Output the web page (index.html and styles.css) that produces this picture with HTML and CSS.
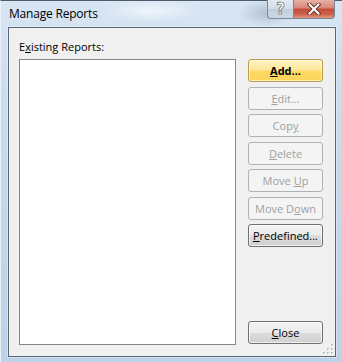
FILE: index.html
```html
<!DOCTYPE html>
<html>
<head>
<meta charset="utf-8">
<link rel="stylesheet" href="styles.css">
</head>
<body>
<div class="window">
  <div class="titlebar">
    <span class="title">Manage Reports</span>
    <div class="caption">
      <div class="cap-btn help"><span>?</span></div>
      <div class="cap-btn close-x">
        <svg width="14" height="12" viewBox="0 0 14 12"><path d="M2.5 1.5 L11.5 10.5 M11.5 1.5 L2.5 10.5" stroke="#6a3328" stroke-width="4" stroke-linecap="square"/><path d="M2.5 1.5 L11.5 10.5 M11.5 1.5 L2.5 10.5" stroke="#ffffff" stroke-width="2" stroke-linecap="square"/></svg>
      </div>
    </div>
  </div>
  <div class="client">
    <div class="left">
      <div class="label">E<u>x</u>isting Reports:</div>
      <div class="listbox"></div>
    </div>
    <div class="right">
      <div class="btn default"><u>A</u>dd...</div>
      <div class="btn disabled"><u>E</u>dit...</div>
      <div class="btn disabled">Cop<u>y</u></div>
      <div class="btn disabled"><u>D</u>elete</div>
      <div class="btn disabled">Move <u>U</u>p</div>
      <div class="btn disabled">Move D<u>o</u>wn</div>
      <div class="btn"><u>P</u>redefined...</div>
      <div class="spacer"></div>
      <div class="btn"><u>C</u>lose</div>
    </div>
    <svg class="grip" width="11" height="11" viewBox="0 0 11 11">
      <g fill="#b9bcc0">
        <rect x="8" y="0" width="2" height="2"/>
        <rect x="4" y="4" width="2" height="2"/><rect x="8" y="4" width="2" height="2"/>
        <rect x="0" y="8" width="2" height="2"/><rect x="4" y="8" width="2" height="2"/><rect x="8" y="8" width="2" height="2"/>
      </g>
      <g fill="#ffffff">
        <rect x="9" y="1" width="1" height="1"/>
        <rect x="5" y="5" width="1" height="1"/><rect x="9" y="5" width="1" height="1"/>
        <rect x="1" y="9" width="1" height="1"/><rect x="5" y="9" width="1" height="1"/><rect x="9" y="9" width="1" height="1"/>
      </g>
    </svg>
  </div>
</div>
</body>
</html>
```
FILE: styles.css
```css
html, body {
  margin: 0;
  padding: 0;
  background: #c9dbec;
}
body {
  font-family: "Open Sans", "Noto Sans", sans-serif;
}
.window {
  width: 342px;
  height: 362px;
  box-sizing: border-box;
  border-top: 1px solid #4f5b68;
  border-left: 1px solid #e9f0f7;
  background:
    radial-gradient(ellipse 40px 20px at 265px 12px, rgba(150,165,180,0.55), rgba(150,165,180,0) 70%),
    radial-gradient(ellipse 60px 14px at 150px 10px, rgba(255,255,255,0.6), rgba(255,255,255,0) 80%),
    linear-gradient(180deg, #d8e6f4 0px, #d4e3f2 26px, #c9dbec 120px, #bcd2e7 362px);
  display: flex;
  flex-direction: column;
  position: relative;
}
.titlebar {
  height: 26px;
  display: flex;
  align-items: flex-start;
  flex: none;
}
.title {
  font-size: 12px;
  color: #000;
  margin-left: 8px;
  margin-top: 5px;
  line-height: 16px;
  letter-spacing: -0.2px;
}
.caption {
  margin-left: auto;
  margin-right: 7px;
  display: flex;
  margin-top: -1px;
}
.cap-btn {
  height: 19px;
  box-sizing: border-box;
  display: flex;
  align-items: center;
  justify-content: center;
  border: 1px solid #7b8796;
  border-top: none;
}
.help {
  width: 26px;
  border-radius: 0 0 0 4px;
  border-right: none;
  background: linear-gradient(180deg, #e2e9f1 0%, #d3dde8 50%, #c0cedc 52%, #ccd8e4 100%);
}
.help span {
  font-family: "DejaVu Sans", sans-serif;
  font-size: 15px;
  font-weight: bold;
  color: #ffffff;
  -webkit-text-stroke: 0.6px #4a5666;
  line-height: 15px;
}
.close-x {
  width: 42px;
  border-radius: 0 0 4px 0;
  background: linear-gradient(180deg, #e7b1a6 0%, #d88677 45%, #c24935 50%, #cd6451 80%, #e19a7e 100%);
}
.client {
  flex: 1;
  margin: 0 6px 5px 7px;
  border: 1px solid #5c6774;
  background: #f0f0f0;
  display: flex;
  padding: 11px 12px 12px 10px;
  position: relative;
  box-shadow: 0 0 0 1px rgba(255,255,255,0.35);
}
.left {
  flex: 1;
  display: flex;
  flex-direction: column;
}
.label {
  font-size: 11px;
  line-height: 16px;
  color: #000;
  margin-bottom: 4px;
}
.listbox {
  flex: 1;
  background: #fff;
  border: 1px solid #828790;
  margin-bottom: -1px;
}
.right {
  width: 75px;
  margin-left: 12px;
  margin-top: 20px;
  display: flex;
  flex-direction: column;
  gap: 4.5px;
}
.spacer {
  flex: 1;
}
.btn {
  height: 23px;
  box-sizing: border-box;
  border: 1px solid #707070;
  border-radius: 3px;
  background: linear-gradient(180deg, #f2f2f2 0%, #ebebeb 50%, #dddddd 50%, #cfcfcf 100%);
  box-shadow: inset 0 0 0 1px rgba(255,255,255,0.7);
  font-size: 11px;
  line-height: 21px;
  text-align: center;
  color: #000;
  flex: none;
}
.btn.default {
  border-color: #b99d4e;
  background: linear-gradient(180deg, #fff3c4 0%, #fee79b 45%, #fcd864 55%, #fbd45a 100%);
  box-shadow: inset 0 0 0 1px rgba(255,250,225,0.7);
  font-weight: bold;
}
.btn.disabled {
  border-color: #adb2b5;
  background: #f4f4f4;
  box-shadow: none;
  color: #a0a0a0;
}
.grip {
  position: absolute;
  right: 1px;
  bottom: 1px;
}
```
